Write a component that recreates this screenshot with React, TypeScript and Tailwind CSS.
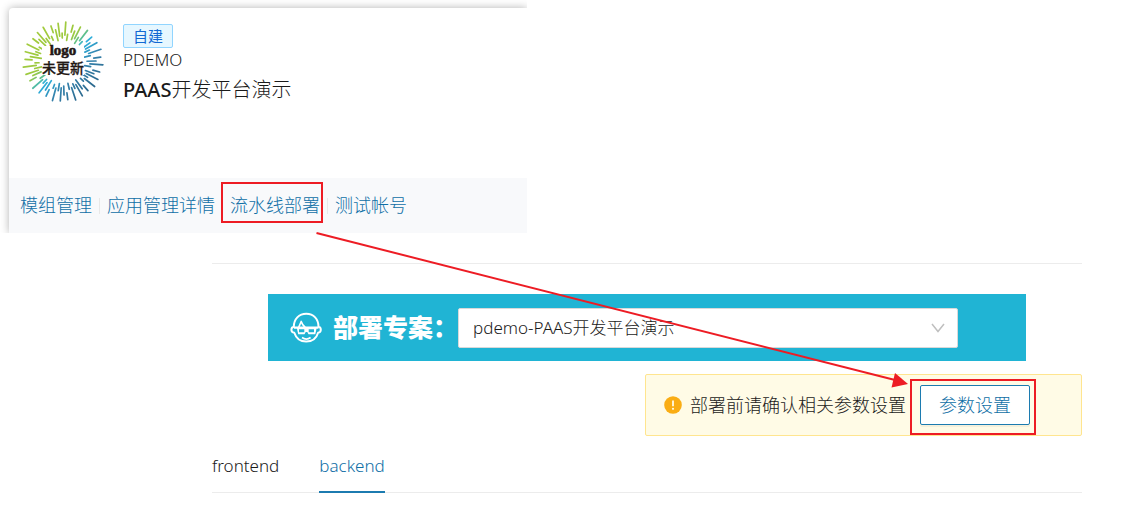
import type { ReactNode } from "react";

const toLine = (degrees: number, inner: number, outer: number) => {
  const angle = (degrees * Math.PI) / 180;
  return {
    x1: 42 + Math.cos(angle) * inner,
    y1: 42 + Math.sin(angle) * inner,
    x2: 42 + Math.cos(angle) * outer,
    y2: 42 + Math.sin(angle) * outer,
  };
};

// long outer strokes with short inner ones between them
const rays = Array.from({ length: 32 }, (_, i) => {
  const degrees = 4 + (i * 360) / 32;
  return [
    toLine(degrees, [27, 31, 26][i % 3], [40, 38, 39][i % 3]),
    toLine(degrees + 5.5, [22, 24][i % 2], [28, 33, 29][i % 3]),
  ];
}).flat();

const appLinks = [
  { label: "模组管理", href: "#modules" },
  { label: "应用管理详情", href: "#detail" },
  { label: "流水线部署", href: "#pipeline", marked: true },
  { label: "测试帐号", href: "#accounts" },
];

const tabs = ["frontend", "backend"];

function AppLogo() {
  return (
    <svg viewBox="0 0 84 84" className="h-[84px] w-[84px] shrink-0">
      <defs>
        <linearGradient id="burst" gradientUnits="userSpaceOnUse" x1="12" y1="12" x2="72" y2="72">
          <stop offset="0" stopColor="#a3cb3d" />
          <stop offset="0.36" stopColor="#9cc93f" />
          <stop offset="0.45" stopColor="#5cbf8f" />
          <stop offset="0.52" stopColor="#2fb0dc" />
          <stop offset="0.6" stopColor="#2fa0cc" />
          <stop offset="0.7" stopColor="#3583ad" />
          <stop offset="1" stopColor="#2a6488" />
        </linearGradient>
      </defs>
      <g stroke="url(#burst)" strokeWidth="1.7" strokeLinecap="round">
        {rays.map((ray, i) => (
          <line key={i} {...ray} />
        ))}
      </g>
      <rect x="21" y="26" width="42" height="29" fill="#fff" />
      <text
        x="42"
        y="35"
        textAnchor="middle"
        fill="#231815"
        stroke="#231815"
        strokeWidth="0.6"
        className="font-['Liberation_Serif',serif] text-[15px] font-bold"
      >
        logo
      </text>
      <text
        x="42"
        y="53"
        textAnchor="middle"
        fill="#231815"
        stroke="#231815"
        strokeWidth="0.3"
        className="font-['Noto_Sans_CJK_SC',sans-serif] text-[14px] font-medium"
      >
        未更新
      </text>
    </svg>
  );
}

function FaceIcon() {
  return (
    <svg viewBox="0 0 32 32" className="h-8 w-8 shrink-0" fill="none" stroke="#fff" strokeWidth="2" strokeLinejoin="round">
      <path d="M3.800 14.800C3.800 7 9 1.700 16.300 1.700S28.500 7 28.500 14.800c1.600.3 2.300 1.400 2.300 2.900s-.9 2.800-2.700 3C26.500 26 22 29.500 16.200 29.500S6 26 4.300 20.700c-1.800-.2-2.900-1.500-2.900-3s.9-2.600 2.400-2.900Z" />
      <path d="M8.600 15.500 11.200 9.500c.8 2.400 2 4.200 4 6" strokeWidth="1.700" />
      <path
        d="M4 14.600H28.500V16.800H26.500L25.300 22.300H18.500L17.300 20H15.700L14.500 22.300H8.200L7 16.800H4ZM9 17.200V20.200H14.300V17.200ZM18.700 17.200V20.200H24V17.200Z"
        fill="#fff"
        fillRule="evenodd"
        stroke="none"
      />
      <path d="M12 25.500c2.600 1.900 6 1.900 8.600 0" strokeWidth="1.600" />
    </svg>
  );
}

function Marked({ on, className, children }: { on?: boolean; className: string; children: ReactNode }) {
  return (
    <span className="relative flex">
      {children}
      {on && <span className={`pointer-events-none absolute border-2 border-[#ed1c24] ${className}`} />}
    </span>
  );
}

function AppCard() {
  return (
    <div className="max-w-[527px] overflow-hidden pt-2 pl-[9px]">
      <section className="rounded-tl bg-white shadow-[0_0_9px_rgba(0,0,0,0.3)]">
        <div className="flex h-[170px] gap-[18px] pt-3 pl-3">
          <AppLogo />
          <div className="pt-1">
            <span className="inline-flex h-6 items-center rounded-[2px] border border-[#91d5ff] bg-[#e6f7ff] px-[9px] text-[15px] font-normal text-[#1269d3]">
              自建
            </span>
            <p className="text-[17px] leading-6">PDEMO</p>
            <h2 className="mt-1 text-[20px] leading-7">
              <span className="font-medium">PAAS</span>开发平台演示
            </h2>
          </div>
        </div>
        <nav className="flex h-[55px] items-center bg-[#f8f9fb] pl-1">
          {appLinks.map((link, i) => (
            <div key={link.label} className="flex items-center">
              {i > 0 && <span className="h-4 w-px bg-[#e8e8e8]" />}
              <Marked on={link.marked} className="-top-[11px] right-1 -bottom-[5px] -left-[2px]">
                <a href={link.href} className="px-[7px] text-lg leading-[25px] text-[#0f6fa6]">
                  {link.label}
                </a>
              </Marked>
            </div>
          ))}
        </nav>
      </section>
    </div>
  );
}

export default function App() {
  return (
    <div className="relative min-h-screen overflow-x-hidden bg-white font-['Noto_Sans','Noto_Sans_CJK_SC',sans-serif] font-light text-[#1a1a1a]">
      <AppCard />

      <main className="mt-[30px] mr-[47px] ml-[212px] flex flex-col border-t border-[#ececec] pt-[30px]">
        <div className="mx-14 flex h-[67px] items-center bg-[#20b4d4] pl-[22px]">
          <FaceIcon />
          <label htmlFor="project" className="ml-[11px] shrink-0 text-[25px] font-black text-white">
            部署专案：
          </label>
          <div className="relative mr-[68px] flex-1">
            <select
              id="project"
              className="h-10 w-full appearance-none rounded-[2px] border border-[#d9d9d9] bg-white px-[14px] text-[17px]"
            >
              <option>pdemo-PAAS开发平台演示</option>
            </select>
            <svg
              viewBox="0 0 14 10"
              className="pointer-events-none absolute top-[15px] right-[13px] h-[10px] w-[14px]"
              fill="none"
              stroke="#bfbfbf"
              strokeWidth="1.5"
            >
              <path d="M1 1l6 7.500L13 1" />
            </svg>
          </div>
        </div>

        <div className="mt-[13px] flex h-[62px] items-center self-end rounded-[2px] border border-[#ffe58f] bg-[#fffbe6] pr-[51px] pl-[18px]">
          <svg viewBox="0 0 18 18" className="h-[18px] w-[18px]">
            <circle cx="9" cy="9" r="8.800" fill="#faad14" />
            <path d="M9 4.600v5.600" stroke="#fffbe6" strokeWidth="1.800" />
            <circle cx="9" cy="12.800" r="1.100" fill="#fffbe6" />
          </svg>
          <p className="mr-[14px] ml-2 text-lg">部署前请确认相关参数设置</p>
          <Marked on className="-top-[6px] -right-[6px] -bottom-[10px] -left-[10px]">
            <button
              type="button"
              className="h-10 rounded-[2px] border border-[#1c7bb0] bg-white px-[18px] text-lg text-[#0f6fa6] shadow-[0_2px_0_rgba(0,0,0,0.045)]"
            >
              参数设置
            </button>
          </Marked>
        </div>

        <div role="tablist" className="mt-[10px] flex gap-10 border-b border-[#ececec]">
          {tabs.map((tab) => (
            <button
              key={tab}
              type="button"
              role="tab"
              aria-selected={tab === "backend"}
              className={
                tab === "backend"
                  ? "-mb-px h-[47px] border-b-2 border-[#1c7bb0] pb-[6px] text-[17px] text-[#0f6fa6]"
                  : "-mb-px h-[47px] border-b-2 border-transparent pb-[6px] text-[17px]"
              }
            >
              {tab}
            </button>
          ))}
        </div>
      </main>

      <svg
        viewBox="0 0 600 160"
        className="pointer-events-none absolute top-[230px] left-[315px] h-[160px] w-[600px]"
      >
        <path d="M1.500 3 580 150" stroke="#ed1c24" strokeWidth="2" />
        <path d="M593 154 576.500 157.500l3.500-14.500Z" fill="#ed1c24" />
      </svg>
    </div>
  );
}
